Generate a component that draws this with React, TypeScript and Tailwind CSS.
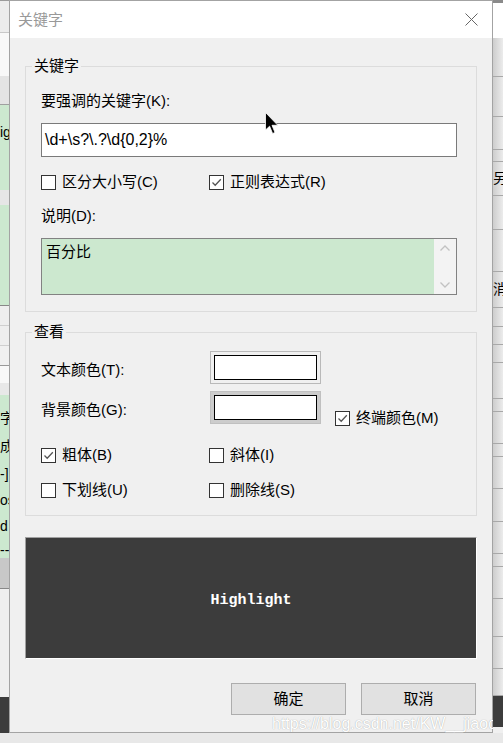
import React from 'react';

const UI_FONT = '"Liberation Sans", "Noto Sans CJK SC", sans-serif';

// background window strips, cut off by the dialog
const leftRows: { cls: string; text?: string }[] = [
  { cls: 'h-[1px] bg-[#9a9a9a]' },
  { cls: 'h-[31px] bg-[#ececec]' },
  { cls: 'h-[1px] bg-[#c8c8c8]' },
  { cls: 'h-[43px] bg-[#f8f8f8]' },
  { cls: 'h-[28px] bg-[#e4e4e4]' },
  { cls: 'h-[1px] bg-[#a0a0a0]' },
  { cls: 'h-[85px] bg-[#cce8cf] pt-[17px]', text: 'ig' },
  { cls: 'h-[15px] bg-[#e6e6e6]' },
  { cls: 'h-[100px] bg-[#cce8cf]' },
  { cls: 'h-[1px] bg-[#888888]' },
  { cls: 'h-[19px] bg-[#eeeeee]' },
  { cls: 'h-[1px] bg-[#cfcfcf]' },
  { cls: 'h-[19px] bg-[#eeeeee]' },
  { cls: 'h-[1px] bg-[#cfcfcf]' },
  { cls: 'h-[19px] bg-[#f0f0f0]' },
  { cls: 'h-[1px] bg-[#999999]' },
  { cls: 'h-[17px] bg-[#f8f8f8]' },
  { cls: 'h-[12px] bg-[#e8e8e8]' },
];

const greenLines = [
  { cls: 'h-[28px]', text: '字' },
  { cls: 'h-[28px]', text: '成' },
  { cls: 'h-[28px]', text: '-]' },
  { cls: 'h-[24px]', text: 'os' },
  { cls: 'h-[28px]', text: 'd' },
  { cls: 'h-[20px]', text: '--' },
];

const rightRows: { cls: string; text?: string }[] = [
  { cls: 'h-[39px]' },
  { cls: 'h-[40px]' },
  { cls: 'h-[33px]' },
  { cls: 'h-[12px]' },
  { cls: 'h-[34px]', text: '另' },
  { cls: 'h-[34px]' },
  { cls: 'h-[42px]' },
  { cls: 'h-[36px]', text: '消' },
  { cls: 'h-[19px]' },
  { cls: 'h-[18px]' },
  { cls: 'h-[18px]' },
  { cls: 'h-[36px]' },
  { cls: 'h-[13px]' },
  { cls: 'h-[32px]' },
  { cls: 'h-[13px]' },
  { cls: 'h-[32px]' },
  { cls: 'h-[33px]' },
  { cls: 'h-[32px]' },
  { cls: 'h-[13px]' },
  { cls: 'h-[32px]' },
  { cls: 'h-[38px]' },
  { cls: 'h-[32px]' },
  { cls: 'h-[27px]' },
];

function CheckBox({ checked, label }: { checked?: boolean; label: string }) {
  return (
    <div className="flex h-[20px] items-center">
      <span className="flex h-[15px] w-[15px] shrink-0 items-center justify-center border border-[#333333] bg-white">
        {checked && (
          <svg width="13" height="13" viewBox="0 0 13 13">
            <path d="M2.5 6.5 L5.2 9.2 L10.8 3.2" fill="none" stroke="#555555" strokeWidth="1.3" />
          </svg>
        )}
      </span>
      <span className="ml-[6px] whitespace-nowrap text-[15px] leading-[20px] text-black">{label}</span>
    </div>
  );
}

function GroupBox({ title, className, children }: { title: string; className?: string; children: React.ReactNode }) {
  return (
    <fieldset className={`m-0 min-w-0 border border-[#dcdcdc] p-0 ${className ?? ''}`}>
      <legend className="ml-[6px] px-[2px] text-[15px] leading-[20px] text-black">{title}</legend>
      {children}
    </fieldset>
  );
}

function Swatch({ pressed }: { pressed?: boolean }) {
  return (
    <div
      className={`h-[33px] w-[111px] shrink-0 border p-[3px] ${
        pressed ? 'border-[#c0c0c0] bg-[#cccccc]' : 'border-[#b9b9b9] bg-[#f0f0f0]'
      }`}
    >
      <div className="h-full w-full border border-black bg-white" />
    </div>
  );
}

export default function App() {
  return (
    <div className="relative h-[743px] w-[503px] overflow-hidden bg-[#e8e8e8]" style={{ fontFamily: UI_FONT }}>
      <div className="flex h-[733px]">
        {/* left part of the window behind */}
        <div className="flex w-[9px] shrink-0 flex-col overflow-hidden">
          {leftRows.map((r, i) => (
            <div key={i} className={`shrink-0 overflow-hidden whitespace-nowrap text-[14px] leading-[20px] text-black ${r.cls}`}>
              {r.text}
            </div>
          ))}
          <div className="h-[163px] shrink-0 overflow-hidden bg-[#cce8cf] pt-[9px] text-[14px] text-black">
            {greenLines.map((l, i) => (
              <div key={i} className={`flex items-center whitespace-nowrap ${l.cls}`}>
                {l.text}
              </div>
            ))}
          </div>
          <div className="h-[30px] shrink-0 bg-[#c8c8c8]" />
          <div className="h-[1px] shrink-0 bg-[#888888]" />
          <div className="h-[108px] shrink-0 bg-[#efefef]" />
          <div className="h-[36px] shrink-0 bg-[#3c3c3c]" />
        </div>

        {/* dialog */}
        <div className="flex h-[733px] w-[484px] shrink-0 flex-col border border-[#a3a3a3] bg-[#f0f0f0]">
          <div className="flex h-[37px] shrink-0 items-center justify-between bg-white pl-[8px] pr-[14px]">
            <span className="text-[15px] leading-[20px] text-[#999999]">关键字</span>
            <svg width="13" height="13" viewBox="0 0 13 13">
              <path d="M0.5 0.5 L12.5 12.5 M12.5 0.5 L0.5 12.5" stroke="#666666" strokeWidth="1" />
            </svg>
          </div>

          <div className="flex flex-col px-[15px]">
            <GroupBox title="关键字" className="mt-[18px]">
              <div className="flex flex-col pb-[16px] pl-[15px] pr-[19px] pt-[15px]">
                <div className="text-[15px] leading-[20px] text-black">要强调的关键字(K):</div>
                <div className="mt-[12px] flex h-[34px] items-center border border-[#7a7a7a] bg-white px-[3px] text-[16px] text-black">
                  \d+\s?\.?\d{'{'}0,2{'}'}%
                </div>
                <div className="mt-[15px] flex">
                  <div className="w-[168px]">
                    <CheckBox label="区分大小写(C)" />
                  </div>
                  <CheckBox checked label="正则表达式(R)" />
                </div>
                <div className="mt-[14px] text-[15px] leading-[20px] text-black">说明(D):</div>
                <div className="mt-[12px] flex h-[57px] border border-[#828282] bg-[#cce8cf]">
                  <div className="flex-1 px-[4px] pt-[2px] text-[15px] leading-[22px] text-black">百分比</div>
                  <div className="flex w-[22px] flex-col items-center justify-between bg-[#f3f3f3] py-[6px]">
                    <svg width="10" height="6" viewBox="0 0 10 6">
                      <path d="M0.5 5.5 L5 1 L9.5 5.5" fill="none" stroke="#c2c2c2" strokeWidth="1.3" />
                    </svg>
                    <svg width="10" height="6" viewBox="0 0 10 6">
                      <path d="M0.5 0.5 L5 5 L9.5 0.5" fill="none" stroke="#c2c2c2" strokeWidth="1.3" />
                    </svg>
                  </div>
                </div>
              </div>
            </GroupBox>

            <GroupBox title="查看" className="mt-[10px]">
              <div className="flex flex-col pb-[15px] pl-[15px] pr-[19px] pt-[9px]">
                <div className="flex h-[33px] items-start">
                  <div className="mt-[9px] w-[169px] text-[15px] leading-[20px] text-black">文本颜色(T):</div>
                  <Swatch />
                </div>
                <div className="mt-[7px] flex h-[33px] items-start">
                  <div className="mt-[9px] w-[169px] text-[15px] leading-[20px] text-black">背景颜色(G):</div>
                  <Swatch pressed />
                  <div className="ml-[14px] mt-[17px]">
                    <CheckBox checked label="终端颜色(M)" />
                  </div>
                </div>
                <div className="mt-[21px] flex">
                  <div className="w-[168px]">
                    <CheckBox checked label="粗体(B)" />
                  </div>
                  <CheckBox label="斜体(I)" />
                </div>
                <div className="mt-[15px] flex">
                  <div className="w-[168px]">
                    <CheckBox label="下划线(U)" />
                  </div>
                  <CheckBox label="删除线(S)" />
                </div>
              </div>
            </GroupBox>

            <div className="mt-[21px] flex h-[122px] items-center justify-center border-b border-l border-r border-t border-b-white border-l-[#a0a0a0] border-r-white border-t-[#a0a0a0] bg-[#3c3c3c] pt-[6px]">
              <span
                className="text-[15px] font-bold leading-[20px] text-white"
                style={{ fontFamily: '"Liberation Mono", "Courier New", monospace' }}
              >
                Highlight
              </span>
            </div>

            <div className="mr-[1px] mt-[24px] flex justify-end gap-[15px]">
              <button className="h-[32px] w-[115px] border border-[#adadad] bg-[#e1e1e1] text-[15px] text-black">确定</button>
              <button className="h-[32px] w-[115px] border border-[#adadad] bg-[#e1e1e1] text-[15px] text-black">取消</button>
            </div>
          </div>
        </div>

        {/* right part of the window behind */}
        <div className="flex w-[10px] shrink-0 flex-col overflow-hidden">
          <div className="h-[3px] shrink-0 bg-[#8a8a8a]" />
          <div className="h-[35px] shrink-0 bg-white" />
          {rightRows.map((r, i) => (
            <div
              key={i}
              className={`flex shrink-0 items-center overflow-hidden whitespace-nowrap border-b border-[#a8a8a8] bg-gradient-to-r from-[#cdcdcd] to-[#ececec] text-[14px] text-black ${r.cls}`}
            >
              {r.text}
            </div>
          ))}
          <div className="h-[31px] shrink-0 bg-[#3c3c3c]" />
          <div className="h-[6px] shrink-0 bg-[#f0f0f0]" />
        </div>
      </div>
      <div className="h-[10px] bg-[#e8e8e8]" />

      {/* blog watermark */}
      <div className="absolute left-[272px] top-[713px] w-[221px] overflow-hidden whitespace-nowrap text-[16px] leading-[22px] text-white [text-shadow:0_0_1px_#9a9a9a]">
        https://blog.csdn.net/KW__jiaoq
      </div>

      {/* mouse pointer */}
      <svg className="absolute left-[265px] top-[112px]" width="14" height="23" viewBox="0 0 14 23">
        <path d="M0.5 0.5 L0.5 18 L4.6 14.2 L7.6 21.5 L10 20.5 L7 13.3 L12.8 13.3 Z" fill="#000" stroke="#fff" strokeWidth="0.8" />
      </svg>
    </div>
  );
}
